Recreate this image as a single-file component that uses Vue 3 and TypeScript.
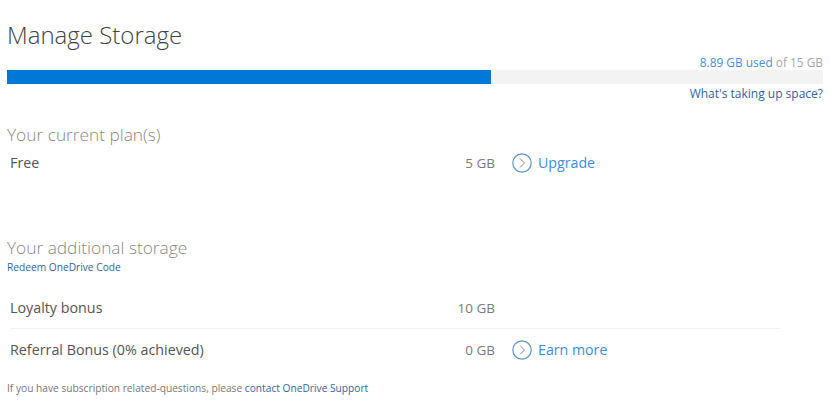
<script setup lang="ts">
type Plan = {
  name: string
  size: string
  action?: string
}

const usedPercent = (8.89 / 15) * 100

const currentPlans: Plan[] = [{ name: 'Free', size: '5 GB', action: 'Upgrade' }]

const extraStorage: Plan[] = [
  { name: 'Loyalty bonus', size: '10 GB' },
  { name: 'Referral Bonus (0% achieved)', size: '0 GB', action: 'Earn more' }
]
</script>

<template>
  <main class="page">
    <h1 class="title">Manage Storage</h1>
    <div class="usage-label"><span class="used">8.89 GB used</span> of 15 GB</div>
    <div class="bar">
      <div class="bar-fill" :style="{ width: usedPercent + '%' }"></div>
    </div>
    <div class="space-link"><a class="link">What's taking up space?</a></div>

    <h2 class="section-title plans-title">Your current plan(s)</h2>
    <div class="rows plans">
      <div v-for="plan in currentPlans" :key="plan.name" class="row">
        <span class="name">{{ plan.name }}</span>
        <span class="size">{{ plan.size }}</span>
        <a v-if="plan.action" class="action">
          <svg class="chevron" width="20" height="20" viewBox="0 0 20 20" fill="none">
            <circle cx="10" cy="10" r="9.2" stroke="#5b96cc" stroke-width="1.2" />
            <path d="M8 5.5 L12.5 10 L8 14.5" stroke="#7d8fa3" stroke-width="1" />
          </svg>
          {{ plan.action }}
        </a>
      </div>
    </div>

    <h2 class="section-title extra-title">Your additional storage</h2>
    <a class="link redeem">Redeem OneDrive Code</a>
    <div class="rows extra">
      <div v-for="plan in extraStorage" :key="plan.name" class="row divided">
        <span class="name">{{ plan.name }}</span>
        <span class="size">{{ plan.size }}</span>
        <a v-if="plan.action" class="action">
          <svg class="chevron" width="20" height="20" viewBox="0 0 20 20" fill="none">
            <circle cx="10" cy="10" r="9.2" stroke="#5b96cc" stroke-width="1.2" />
            <path d="M8 5.5 L12.5 10 L8 14.5" stroke="#7d8fa3" stroke-width="1" />
          </svg>
          {{ plan.action }}
        </a>
      </div>
    </div>

    <p class="foot">If you have subscription related-questions, please <a class="link">contact OneDrive Support</a></p>
  </main>
</template>

<style>
body {
  background: #fff;
}
</style>

<style scoped>
.page {
  width: 823px;
  height: 408px;
  padding-left: 7px;
  box-sizing: border-box;
  overflow: hidden;
  font-family: 'Open Sans', 'Noto Sans', sans-serif;
  color: #555;
}

.title {
  margin: 0;
  padding-top: 19px;
  font-size: 24px;
  line-height: 32px;
  font-weight: 300;
  color: #444;
}

.usage-label {
  margin-top: 3px;
  font-size: 11.9px;
  line-height: 16px;
  text-align: right;
  color: #a6a6a6;
}

.used {
  color: #4a90d9;
}

.bar {
  height: 14px;
  background: #f3f3f3;
}

.bar-fill {
  height: 100%;
  background: #0078d7;
}

.space-link {
  margin-top: 1px;
  font-size: 12px;
  line-height: 18px;
  text-align: right;
}

.link {
  color: #34659c;
}

.section-title {
  margin: 0;
  font-size: 17.3px;
  line-height: 24px;
  font-weight: 300;
  color: #8a8a8a;
}

.plans-title {
  margin-top: 20px;
}

.extra-title {
  margin-top: 58px;
}

.redeem {
  display: block;
  font-size: 10.2px;
  line-height: 12px;
  margin-top: 1px;
}

.rows {
  width: 770px;
  margin-left: 3px;
}

.extra {
  margin-top: 14px;
}

.row {
  display: grid;
  grid-template-columns: 485px auto;
  justify-content: start;
  align-items: center;
  height: 41px;
  font-size: 14.3px;
}

.plans .row {
  height: 31px;
}

.divided + .divided {
  border-top: 1px solid #f1f1f1;
}

.name {
  grid-column: 1;
  grid-row: 1;
  color: #555;
}

.size {
  grid-column: 1;
  grid-row: 1;
  justify-self: end;
  font-size: 13.5px;
  color: #7a7a7a;
}

.action {
  grid-column: 2;
  grid-row: 1;
  display: flex;
  align-items: center;
  gap: 6px;
  margin-left: 17px;
  font-size: 14.2px;
  color: #3f8ddb;
}

.chevron {
  flex: none;
}

.foot {
  margin: 10px 0 0;
  font-size: 10.2px;
  line-height: 16px;
  color: #777;
}
</style>
